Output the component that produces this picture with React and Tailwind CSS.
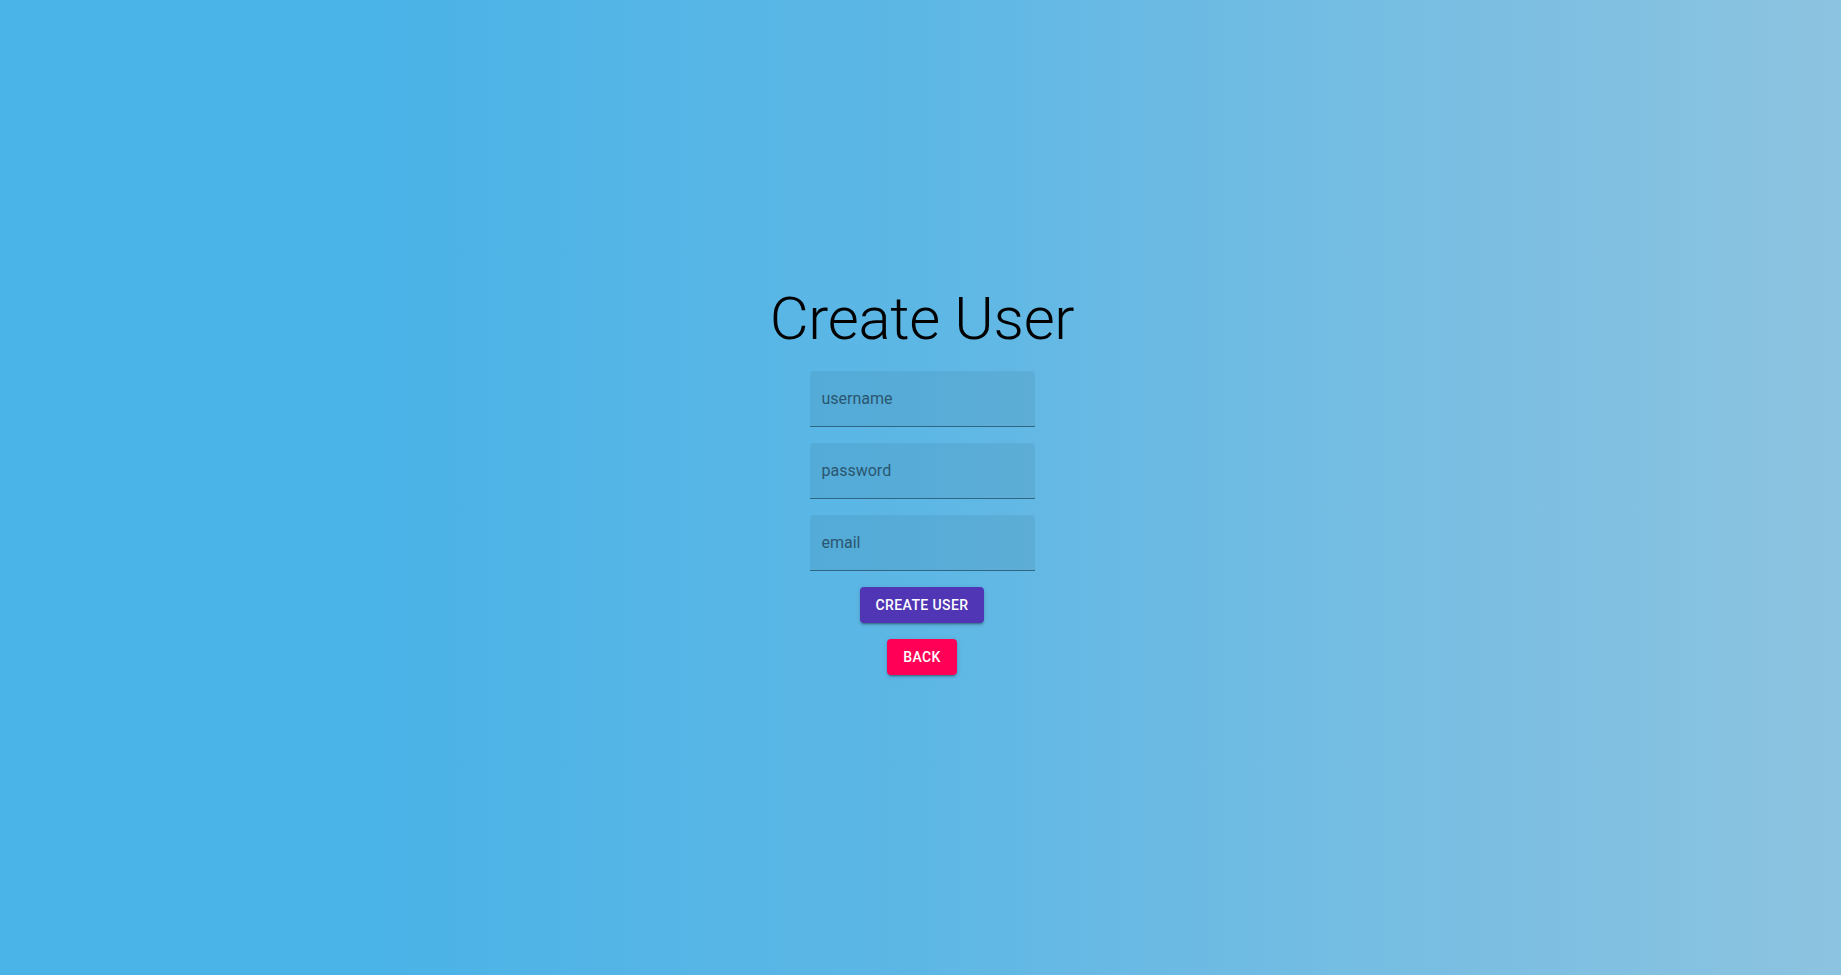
// Create User page: centered title, three filled text fields, two buttons
export default function App() {
  const fields = ["username", "password", "email"];

  return (
    <div
      className="h-screen w-full bg-gradient-to-r from-[#4ab3e7] from-20% via-[#5db7e5] via-50% to-[#8cc3e0] flex flex-col items-center pt-[283px] pl-[3px]"
      style={{ fontFamily: "Roboto, 'Liberation Sans', sans-serif" }}
    >
      <h1 className="text-[60px] leading-[72px] font-light text-black tracking-[-0.3px]">
        Create User
      </h1>

      {/* Filled text fields */}
      <div className="mt-4 flex flex-col gap-4">
        {fields.map((f) => (
          <div
            key={f}
            className="w-[225px] h-14 bg-black/[0.06] rounded-t border-b border-[#2e6683] flex items-center px-3"
          >
            <input
              type={f === "password" ? "password" : "text"}
              placeholder={f}
              className="w-full bg-transparent outline-none text-base text-[#254a5f] placeholder:text-[#2a5670]"
            />
          </div>
        ))}
      </div>

      <button className="mt-4 h-9 w-[124px] rounded bg-[#5035b4] text-white text-sm font-medium uppercase tracking-[0.4px] shadow-[0_3px_1px_-2px_rgba(0,0,0,0.2),0_2px_2px_0_rgba(0,0,0,0.14),0_1px_5px_0_rgba(0,0,0,0.12)]">
        Create User
      </button>
      <button className="mt-4 h-9 w-[70px] rounded bg-[#ff0056] text-white text-sm font-medium uppercase tracking-[0.4px] shadow-[0_3px_1px_-2px_rgba(0,0,0,0.2),0_2px_2px_0_rgba(0,0,0,0.14),0_1px_5px_0_rgba(0,0,0,0.12)]">
        Back
      </button>
    </div>
  );
}
